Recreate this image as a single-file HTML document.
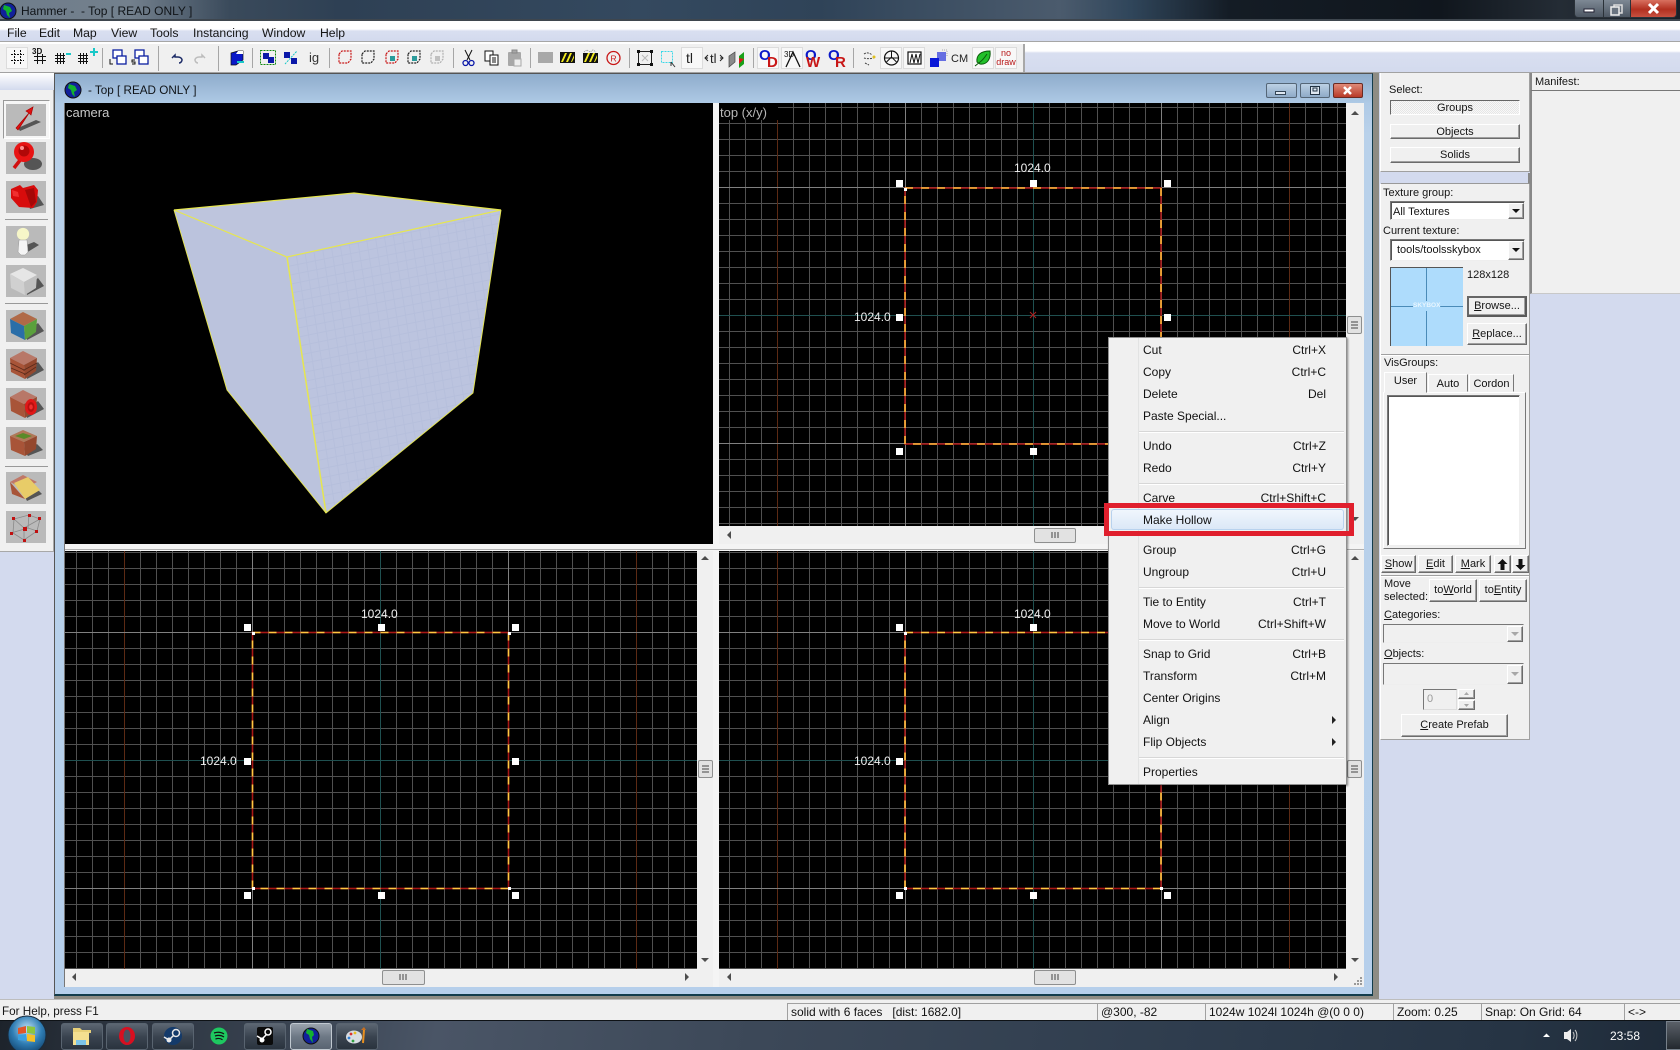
<!DOCTYPE html>
<html>
<head>
<meta charset="utf-8">
<title>Hammer - Top [ READ ONLY ]</title>
<style>
html,body{margin:0;padding:0;width:1680px;height:1050px;overflow:hidden;background:#d3daee}
body{position:relative;font-family:"Liberation Sans",sans-serif;font-size:12px;color:#111}
div{box-sizing:border-box}
.a{position:absolute}
.t{position:absolute;white-space:pre;line-height:14px;font-size:11px;color:#151515}
.b{position:absolute;background:#f0f0f0;border:1px solid;border-color:#fff #6b6b6b #6b6b6b #fff;box-shadow:inset -1px -1px #a0a0a0;text-align:center;white-space:pre;font-size:11px;color:#151515}
.sunk{position:absolute;background:#fff;border:1px solid;border-color:#777 #eee #eee #777;box-shadow:inset 1px 1px #555}
.m{position:absolute;left:1143px;white-space:pre;line-height:14px;font-size:12px;color:#111}
.s{position:absolute;right:354px;white-space:pre;line-height:14px;font-size:12px;color:#111}
.sep{position:absolute;left:1139px;width:205px;height:1px;background:#d7d7d7;border-bottom:1px solid #fff;box-sizing:content-box}
.pane{position:absolute;top:1003px;height:17px;border-left:1px solid #a0a0a0;border-top:1px solid #a0a0a0;padding-left:3px;line-height:16px;font-size:12px;white-space:pre;color:#111}
.tb{position:absolute;top:1023px;height:27px;width:42px;border:1px solid #596470;border-radius:3px;background:linear-gradient(#5c6672,#3a4450 50%,#2a333e)}
.mb{font-size:12.2px;top:26px}
</style>
</head>
<body>

<!-- Title bar -->
<div class="a" style="left:0;top:0;width:1680px;height:21px;background:linear-gradient(90deg,#6f7d8b 0,#73808d 130px,#3a4a5b 230px,#2e4054 340px,#34495f 640px,#2f4358 820px,#4b5b6d 1060px,#30465b 1130px,#141c25 1230px,#10161d 1440px,#242c35 1560px,#1a2028 1680px)"></div>
<div class="a" style="left:0;top:19px;width:1680px;height:2px;background:#3e464e"></div>
<div class="t" style="left:21px;top:4px;font-size:12px;color:#101418">Hammer -  - Top [ READ ONLY ]</div>
<!-- window buttons -->
<div class="a" style="left:1574px;top:0;width:30px;height:18px;background:linear-gradient(#7d8894,#4d5763);border:1px solid #2a3138;border-top:0;border-radius:0 0 0 4px"></div>
<div class="a" style="left:1604px;top:0;width:26px;height:18px;background:linear-gradient(#7d8894,#4d5763);border-bottom:1px solid #2a3138"></div>
<div class="a" style="left:1630px;top:0;width:47px;height:18px;background:linear-gradient(#d8705f,#b23020 55%,#c75040);border:1px solid #2a3138;border-top:0;border-radius:0 0 4px 0"></div>

<!-- Menu band -->
<div class="a" style="left:0;top:21px;width:1680px;height:20px;background:linear-gradient(#fff 0,#fff 8px,#d9dff0 10px,#d3daee 100%)"></div>
<div class="a" style="left:0;top:41px;width:1680px;height:1px;background:#a6a6a6"></div>
<div class="a" style="left:0;top:42px;width:1680px;height:31px;background:linear-gradient(#fff 0,#fff 9px,#d9dff0 11px,#d3daee 100%)"></div>
<div class="t mb" style="left:7px">File</div>
<div class="t mb" style="left:39px">Edit</div>
<div class="t mb" style="left:73px">Map</div>
<div class="t mb" style="left:111px">View</div>
<div class="t mb" style="left:150px">Tools</div>
<div class="t mb" style="left:193px">Instancing</div>
<div class="t mb" style="left:262px">Window</div>
<div class="t mb" style="left:320px">Help</div>

<!-- Toolbar -->
<div class="a" style="left:0;top:44px;width:1025px;height:29px;background:#f0f0f0;border-right:2px solid #a8a8a8;border-bottom:1px solid #a8a8a8"></div>
<div class="a" style="left:0;top:72px;width:1680px;height:1px;background:#a2a2a2"></div>

<!-- Left tool palette -->
<div class="a" style="left:0;top:73px;width:54px;height:17px;background:linear-gradient(#fff,#d3daee)"></div>
<div class="a" style="left:0;top:90px;width:54px;height:462px;background:#f0f0f0;border-right:1px solid #a8a8a8;border-bottom:1px solid #a8a8a8"></div>

<!-- MDI child window frame -->
<div class="a" style="left:1373px;top:73px;width:6px;height:926px;background:#8e8c84"></div>
<div class="a" style="left:54px;top:996px;width:1325px;height:3px;background:#8e8c84"></div>
<div class="a" style="left:54px;top:73px;width:1319px;height:923px;background:linear-gradient(#8fadcc 0,#afcae6 30px,#b9d1ea 60px,#b6cfeb 100%);border:1px solid #555;border-bottom:2px solid #123c4c;border-right:1px solid #123c4c"></div>
<div class="a" style="left:64px;top:103px;width:1300px;height:884px;background:#f0f0f0"></div>
<div class="t" style="left:88px;top:84px;font-size:11.700px;color:#101418">- Top [ READ ONLY ]</div>
<div class="a" style="left:1266px;top:83px;width:31px;height:15px;border:1px solid #567;border-radius:2px;background:linear-gradient(#bcd0e4,#8fabc8)"></div>
<div class="a" style="left:1275px;top:91px;width:11px;height:4px;background:#dfe8f2;border:1px solid #345"></div>
<div class="a" style="left:1300px;top:83px;width:30px;height:15px;border:1px solid #567;border-radius:2px;background:linear-gradient(#bcd0e4,#8fabc8)"></div>
<div class="a" style="left:1310px;top:86px;width:10px;height:9px;border:1px solid #234;background:#dfe8f2"></div>
<div class="a" style="left:1333px;top:83px;width:30px;height:15px;border:1px solid #6a2a22;border-radius:2px;background:linear-gradient(#e08a78,#b83a28)"></div>

<!-- Right side select panel -->
<div class="a" style="left:1380px;top:73px;width:150px;height:99px;background:#f0f0f0;border-bottom:1px solid #a0a0a0;border-right:1px solid #a0a0a0;border-left:1px solid #fff"></div>
<div class="a" style="left:1381px;top:173px;width:149px;height:11px;background:#d3daee;border-bottom:1px solid #999;border-right:2px solid #888"></div>
<div class="a" style="left:1380px;top:184px;width:150px;height:556px;background:#f0f0f0;border-right:1px solid #a0a0a0;border-bottom:1px solid #a0a0a0;border-left:1px solid #fff"></div>
<div class="a" style="left:1530px;top:73px;width:150px;height:221px;background:#f0f0f0;border-left:2px solid #888;border-bottom:1px solid #c8c8c8"></div>
<div class="a" style="left:1531px;top:90px;width:149px;height:1px;background:#777"></div>
<div class="t" style="left:1535px;top:75px">Manifest:</div>
<div class="t" style="left:1389px;top:83px">Select:</div>
<div class="b" style="left:1390px;top:100px;width:130px;height:15px;line-height:14px;border-color:#666 #fff #fff #666;box-shadow:none;background:repeating-conic-gradient(#f8f8f8 0 25%,#e6e6e6 0 50%) 0 0/2px 2px">Groups</div>
<div class="b" style="left:1390px;top:124px;width:130px;height:15px;line-height:14px">Objects</div>
<div class="b" style="left:1390px;top:147px;width:130px;height:16px;line-height:15px">Solids</div>

<div class="t" style="left:1383px;top:186px">Texture group:</div>
<div class="sunk" style="left:1390px;top:201px;width:135px;height:19px"></div>
<div class="t" style="left:1393px;top:205px">All Textures</div>
<div class="b" style="left:1508px;top:203px;width:16px;height:16px"></div>
<div class="t" style="left:1383px;top:224px">Current texture:</div>
<div class="sunk" style="left:1390px;top:239px;width:135px;height:22px"></div>
<div class="t" style="left:1397px;top:243px">tools/toolsskybox</div>
<div class="b" style="left:1508px;top:241px;width:16px;height:19px"></div>
<div class="a" style="left:1390px;top:267px;width:73px;height:79px;background:#aedcfc;border-left:1px solid #555;border-top:1px solid #555"></div>
<div class="a" style="left:1426px;top:268px;width:1px;height:78px;background:#4a8bb8"></div>
<div class="a" style="left:1391px;top:306px;width:72px;height:1px;background:#4a8bb8"></div>
<div class="a" style="left:1413px;top:301px;width:27px;height:10px;background:#aedcfc;color:#e8f6ff;font-size:6.500px;line-height:10px;text-align:center;white-space:pre;font-weight:bold">SKYBOX</div>
<div class="t" style="left:1467px;top:268px">128x128</div>
<div class="b" style="left:1467px;top:296px;width:60px;height:21px;line-height:16px;border:2px solid #5a5a5a;border-top-color:#666;border-left-color:#666"><u>B</u>rowse...</div>
<div class="b" style="left:1467px;top:323px;width:60px;height:22px;line-height:20px"><u>R</u>eplace...</div>
<div class="a" style="left:1381px;top:354px;width:148px;height:1px;background:#a0a0a0;border-bottom:1px solid #fff;box-sizing:content-box"></div>

<div class="t" style="left:1384px;top:356px">VisGroups:</div>
<div class="a" style="left:1383px;top:392px;width:143px;height:157px;background:#f0f0f0;border:1px solid;border-color:#fff #777 #777 #fff"></div>
<div class="a" style="left:1384px;top:372px;width:43px;height:21px;background:#f0f0f0;border:1px solid;border-color:#fff #777 #f0f0f0 #fff;text-align:center;line-height:17px;font-size:11px">User</div>
<div class="a" style="left:1428px;top:374px;width:40px;height:18px;background:#f0f0f0;border:1px solid;border-color:#fff #777 transparent #fff;text-align:center;line-height:18px;font-size:11px">Auto</div>
<div class="a" style="left:1469px;top:374px;width:45px;height:18px;background:#f0f0f0;border:1px solid;border-color:#fff #777 transparent #fff;text-align:center;line-height:18px;font-size:11px">Cordon</div>
<div class="sunk" style="left:1387px;top:395px;width:133px;height:151px"></div>
<div class="b" style="left:1381px;top:555px;width:35px;height:18px;line-height:16px"><u>S</u>how</div>
<div class="b" style="left:1418px;top:555px;width:35px;height:18px;line-height:16px"><u>E</u>dit</div>
<div class="b" style="left:1455px;top:555px;width:36px;height:18px;line-height:16px"><u>M</u>ark</div>
<div class="b" style="left:1494px;top:555px;width:17px;height:18px"></div>
<div class="b" style="left:1512px;top:555px;width:17px;height:18px"></div>
<div class="a" style="left:1381px;top:575px;width:148px;height:1px;background:#a0a0a0;border-bottom:1px solid #fff;box-sizing:content-box"></div>
<div class="t" style="left:1384px;top:577px">Move</div>
<div class="t" style="left:1384px;top:590px">selected:</div>
<div class="b" style="left:1429px;top:579px;width:48px;height:23px;line-height:20px">to<u>W</u>orld</div>
<div class="b" style="left:1479px;top:579px;width:48px;height:23px;line-height:20px">to<u>E</u>ntity</div>
<div class="t" style="left:1384px;top:608px"><u>C</u>ategories:</div>
<div class="a" style="left:1383px;top:624px;width:141px;height:19px;background:#f0f0f0;border:1px solid;border-color:#777 #eee #eee #777"></div>
<div class="b" style="left:1507px;top:626px;width:16px;height:16px"></div>
<div class="t" style="left:1384px;top:647px"><u>O</u>bjects:</div>
<div class="a" style="left:1383px;top:663px;width:141px;height:22px;background:#f0f0f0;border:1px solid;border-color:#777 #eee #eee #777"></div>
<div class="b" style="left:1507px;top:665px;width:16px;height:19px"></div>
<div class="a" style="left:1423px;top:689px;width:34px;height:21px;background:#f0f0f0;border:1px solid;border-color:#777 #ddd #ddd #777;color:#999;line-height:18px;padding-left:3px;font-size:11px">0</div>
<div class="b" style="left:1458px;top:689px;width:17px;height:10px"></div>
<div class="b" style="left:1458px;top:700px;width:17px;height:10px"></div>
<div class="b" style="left:1401px;top:714px;width:107px;height:23px;line-height:20px"><u>C</u>reate Prefab</div>

<!-- Views + everything vector -->
<svg class="a" style="left:0;top:0" width="1680" height="1050" viewBox="0 0 1680 1050" xmlns="http://www.w3.org/2000/svg" font-family="Liberation Sans, sans-serif">
<defs>
<pattern id="g1" patternUnits="userSpaceOnUse" x="729" y="107" width="16" height="16"><rect width="16" height="1" fill="#505050"/><rect width="1" height="16" fill="#505050"/></pattern>
<pattern id="g2" patternUnits="userSpaceOnUse" x="76" y="888" width="16" height="16"><rect width="16" height="1" fill="#505050"/><rect width="1" height="16" fill="#505050"/></pattern>
<pattern id="g3" patternUnits="userSpaceOnUse" x="729" y="888" width="16" height="16"><rect width="16" height="1" fill="#505050"/><rect width="1" height="16" fill="#505050"/></pattern>
<pattern id="tex" patternUnits="userSpaceOnUse" width="9" height="9" patternTransform="matrix(.98 -.2 .15 .98 287 257)"><rect width="9" height="1" fill="#a9b4d4"/><rect width="1" height="9" fill="#a9b4d4"/></pattern>
</defs>

<!-- camera -->
<rect x="64" y="103" width="649" height="441" fill="#000"/>
<polygon points="174,210 354,193 501,210 287,257" fill="#bec5dd"/>
<polygon points="174,210 287,257 326,513 227,390" fill="#bbc3dd"/>
<polygon points="287,257 501,210 473,393 326,513" fill="#bcc4df"/>
<polygon points="287,257 501,210 473,393 326,513" fill="url(#tex)" opacity=".3"/>
<g fill="none" stroke="#e6e650">
<polyline points="174,210 227,390 326,513 473,393 501,210" stroke-width=".9"/>
<polygon points="174,210 354,193 501,210 287,257" stroke-width="1.200"/>
<line x1="287" y1="257" x2="326" y2="513" stroke-width="1.500"/>
</g>
<text x="66" y="117" font-size="13" fill="#c8c8c8">camera</text>

<!-- top view -->
<rect x="719" y="103" width="627" height="423" fill="#000"/>
<rect x="719" y="103" width="627" height="423" fill="url(#g1)"/>
<g shape-rendering="crispEdges">
<rect x="777" y="103" width="1" height="423" fill="#5c2a14"/><rect x="1289" y="103" width="1" height="423" fill="#5c2a14"/>
<rect x="905" y="103" width="1" height="423" fill="#808080"/><rect x="1161" y="103" width="1" height="423" fill="#808080"/>
<rect x="1033" y="103" width="1" height="423" fill="#1f5050"/>
<rect x="719" y="187" width="627" height="1" fill="#808080"/><rect x="719" y="443" width="627" height="1" fill="#808080"/>
<rect x="719" y="315" width="627" height="1" fill="#1f5050"/>
</g>
<rect x="719" y="103" width="59" height="17" fill="#000"/>
<text x="720" y="117" font-size="13" fill="#b8b8b8">top (x/y)</text>
<path d="M1030 312l6 6M1036 312l-6 6" stroke="#b02020" fill="none"/>

<!-- bottom-left -->
<rect x="64" y="551" width="633" height="418" fill="#000"/>
<rect x="64" y="551" width="633" height="418" fill="url(#g2)"/>
<g shape-rendering="crispEdges">
<rect x="124" y="551" width="1" height="418" fill="#5c2a14"/><rect x="636" y="551" width="1" height="418" fill="#5c2a14"/>
<rect x="252" y="551" width="1" height="418" fill="#808080"/><rect x="508" y="551" width="1" height="418" fill="#808080"/>
<rect x="380" y="551" width="1" height="418" fill="#1f5050"/>
<rect x="64" y="632" width="633" height="1" fill="#808080"/><rect x="64" y="888" width="633" height="1" fill="#808080"/>
<rect x="64" y="760" width="633" height="1" fill="#1f5050"/>
</g>

<!-- bottom-right -->
<rect x="719" y="551" width="627" height="418" fill="#000"/>
<rect x="719" y="551" width="627" height="418" fill="url(#g3)"/>
<g shape-rendering="crispEdges">
<rect x="777" y="551" width="1" height="418" fill="#5c2a14"/><rect x="1289" y="551" width="1" height="418" fill="#5c2a14"/>
<rect x="905" y="551" width="1" height="418" fill="#808080"/><rect x="1161" y="551" width="1" height="418" fill="#808080"/>
<rect x="1033" y="551" width="1" height="418" fill="#1f5050"/>
<rect x="719" y="632" width="627" height="1" fill="#808080"/><rect x="719" y="888" width="627" height="1" fill="#808080"/>
<rect x="719" y="760" width="627" height="1" fill="#1f5050"/>
</g>

<!-- selection boxes -->
<g fill="none" stroke-width="1.600">
<rect x="905" y="188" width="256" height="256" stroke="#a81616"/>
<rect x="905" y="188" width="256" height="256" stroke="#ffb838" stroke-dasharray="8 8"/>
<rect x="252.500" y="632.500" width="256" height="256" stroke="#a81616"/>
<rect x="252.500" y="632.500" width="256" height="256" stroke="#ffc840" stroke-dasharray="8 8"/>
<rect x="905" y="632.500" width="256" height="256" stroke="#a81616"/>
<rect x="905" y="632.500" width="256" height="256" stroke="#ffc840" stroke-dasharray="8 8"/>
</g>
<g fill="#fff">
<rect x="896" y="180" width="7" height="7"/><rect x="1030" y="180" width="7" height="7"/><rect x="1164" y="180" width="7" height="7"/>
<rect x="896" y="314" width="7" height="7"/><rect x="1164" y="314" width="7" height="7"/>
<rect x="896" y="448" width="7" height="7"/><rect x="1030" y="448" width="7" height="7"/><rect x="1164" y="448" width="7" height="7"/>
<rect x="904" y="188" width="3" height="3"/>
<rect x="244" y="624" width="7" height="7"/><rect x="378" y="624" width="7" height="7"/><rect x="512" y="624" width="7" height="7"/>
<rect x="244" y="758" width="7" height="7"/><rect x="512" y="758" width="7" height="7"/>
<rect x="244" y="892" width="7" height="7"/><rect x="378" y="892" width="7" height="7"/><rect x="512" y="892" width="7" height="7"/>
<rect x="252" y="632" width="3" height="3"/><rect x="252" y="887" width="3" height="3"/><rect x="508" y="887" width="3" height="3"/><rect x="508" y="632" width="3" height="3"/>
<rect x="896" y="624" width="7" height="7"/><rect x="1030" y="624" width="7" height="7"/><rect x="1164" y="624" width="7" height="7"/>
<rect x="896" y="758" width="7" height="7"/><rect x="1164" y="758" width="7" height="7"/>
<rect x="896" y="892" width="7" height="7"/><rect x="1030" y="892" width="7" height="7"/><rect x="1164" y="892" width="7" height="7"/>
<rect x="904" y="632" width="3" height="3"/><rect x="904" y="887" width="3" height="3"/><rect x="1160" y="887" width="3" height="3"/>
</g>
<g fill="#f0f0f0" font-size="12">
<text x="1014" y="172">1024.0</text>
<text x="854" y="321">1024.0</text>
<text x="361" y="618">1024.0</text>
<text x="200" y="765">1024.0</text>
<text x="1014" y="618">1024.0</text>
<text x="854" y="765">1024.0</text>
</g>

<!-- scroll bars -->
<g>
<rect x="1346" y="103" width="18" height="423" fill="#f0f0f0"/>
<rect x="719" y="526" width="645" height="18" fill="#f0f0f0"/>
<rect x="697" y="551" width="16" height="418" fill="#f0f0f0"/>
<rect x="64" y="969" width="649" height="18" fill="#f0f0f0"/>
<rect x="1346" y="551" width="18" height="418" fill="#f0f0f0"/>
<rect x="719" y="969" width="645" height="18" fill="#f0f0f0"/>
<rect x="713" y="103" width="6" height="884" fill="#f4f4f4"/>
<rect x="64" y="544" width="1300" height="7" fill="#f4f4f4"/>
<rect x="64" y="549" width="1300" height="1" fill="#b0b0b0"/>
<rect x="64" y="103" width="1" height="884" fill="#777"/>
<!-- arrows -->
<g fill="#4d4d4d">
<path d="M1351 115l4-4 4 4z"/><path d="M1351 517l4 4 4-4z"/>
<path d="M731 531l-4 4 4 4z"/><path d="M1333 531l4 4-4 4z"/>
<path d="M701 560l4-4 4 4z"/><path d="M701 958l4 4 4-4z"/>
<path d="M76 973l-4 4 4 4z"/><path d="M685 973l4 4-4 4z"/>
<path d="M1351 560l4-4 4 4z"/><path d="M1351 958l4 4 4-4z"/>
<path d="M731 973l-4 4 4 4z"/><path d="M1334 973l4 4-4 4z"/>
</g>
<!-- thumbs -->
<g stroke="#8e8f8f">
<rect x="1034.500" y="528.500" width="41" height="14" rx="1.500" fill="#e2e2e2"/>
<rect x="1034.500" y="970.500" width="41" height="14" rx="1.500" fill="#e2e2e2"/>
<rect x="382.500" y="970.500" width="42" height="14" rx="1.500" fill="#e2e2e2"/>
<rect x="1347.500" y="316.500" width="14" height="17" rx="1.500" fill="#e2e2e2"/>
<rect x="1347.500" y="760.500" width="14" height="17" rx="1.500" fill="#e2e2e2"/>
<rect x="698.500" y="760.500" width="14" height="17" rx="1.500" fill="#e2e2e2"/>
</g>
<g stroke="#444" fill="none">
<path d="M1052 532v6M1055 532v6M1058 532v6M1052 974v6M1055 974v6M1058 974v6M400 974v6M403 974v6M406 974v6"/>
<path d="M1351 322h7M1351 325h7M1351 328h7M1351 766h7M1351 769h7M1351 772h7M702 766h7M702 769h7M702 772h7"/>
</g>
<g fill="#9a9a9a"><rect x="1360" y="983" width="2" height="2"/><rect x="1357" y="983" width="2" height="2"/><rect x="1354" y="983" width="2" height="2"/><rect x="1360" y="980" width="2" height="2"/><rect x="1357" y="980" width="2" height="2"/><rect x="1360" y="977" width="2" height="2"/></g>
</g>

<!-- globe icons -->
<g>
<circle cx="73" cy="90" r="8" fill="#11209a" stroke="#111"/>
<path d="M69 84l6 2 2 4-3 2 1 5-3-3-1-4-3-2z" fill="#12b030"/>
<circle cx="8" cy="11" r="8" fill="#11209a" stroke="#111"/>
<path d="M4 5l6 2 2 4-3 2 1 5-3-3-1-4-3-2z" fill="#12b030"/>
</g>

<!-- child window close X, title X -->
<path d="M1344 87l7 7M1351 87l-7 7" stroke="#fff" stroke-width="2.500" fill="none"/>
<path d="M1649 4l9 9M1658 4l-9 9" stroke="#fff" stroke-width="3" fill="none"/>
<rect x="1584" y="9" width="10" height="3" fill="#fff" stroke="#223"/>
<rect x="1614" y="5" width="8" height="8" fill="none" stroke="#ddd" stroke-width="1.500"/><rect x="1611" y="7" width="8" height="8" fill="#6a7480" stroke="#eee" stroke-width="1.500"/>
<rect x="1313" y="88" width="4" height="3" fill="none" stroke="#234"/>

<!-- combo arrows -->
<g fill="#111">
<path d="M1512 209h8l-4 4z"/><path d="M1512 248h8l-4 4z"/>
</g>
<g fill="#a8a8a8">
<path d="M1511 632h8l-4 4z"/><path d="M1511 672h8l-4 4z"/><path d="M1464 695l2.500-3 2.500 3z"/><path d="M1464 704l2.500 3 2.500-3z"/>
</g>
<g fill="#111">
<path d="M1502.500 559l5 5h-3v6h-4v-6h-3z"/><path d="M1520.500 570l5-5h-3v-6h-4v6h-3z"/>
</g>

<!-- toolbar separators -->
<g fill="#a6a6a6" shape-rendering="crispEdges">
<rect x="102" y="48" width="1" height="20"/><rect x="158" y="46" width="1" height="25"/><rect x="218" y="46" width="1" height="25"/><rect x="252" y="48" width="1" height="20"/><rect x="329" y="48" width="1" height="20"/><rect x="453" y="48" width="1" height="20"/><rect x="530" y="48" width="1" height="20"/><rect x="629" y="48" width="1" height="20"/><rect x="753" y="48" width="1" height="20"/><rect x="853" y="48" width="1" height="20"/>
</g>
<!-- pressed toolbar backgrounds -->
<g fill="#f8f8f8" stroke="#dcdcdc">
<rect x="6.500" y="47.500" width="21" height="21"/>
<rect x="681.500" y="47.500" width="21" height="21"/>
<rect x="757.500" y="47.500" width="21" height="21"/>
<rect x="781.500" y="47.500" width="21" height="21"/>
<rect x="880.500" y="47.500" width="21" height="21"/>
<rect x="903.500" y="47.500" width="21" height="21"/>
<rect x="972.500" y="47.500" width="21" height="21"/>
<rect x="995.500" y="47.500" width="21" height="21"/>
</g>

<!-- toolbar icons -->
<g fill="none" stroke="#111">
<path d="M11 54.500h13M11 60.500h13M14.500 50v15M20.500 50v15" stroke-dasharray="2 1"/>
<path d="M34 56.500h12M34 60.500h12M37.500 54v10M42.500 54v10"/>
<path d="M55 55.500h10M55 58.500h10M55 61.500h10M57.500 53v11M60.500 53v11M63.500 53v11"/>
<path d="M78 55.500h10M78 58.500h10M78 61.500h10M80.500 53v11M83.500 53v11M86.500 53v11"/>
</g>
<text x="32" y="54" font-size="8" font-weight="bold" fill="#111">3D</text>
<rect x="66" y="53" width="5" height="2" fill="#19c8c8"/>
<path d="M90 51h3v-3h2v3h3v2h-3v3h-2v-3h-3z" fill="#19c8c8"/>
<g fill="#fff" stroke="#0b1ea0" stroke-width="1.300">
<rect x="113" y="50" width="9" height="8"/><rect x="117" y="56" width="9" height="8"/><rect x="135" y="50" width="9" height="8"/><rect x="139" y="56" width="9" height="8"/>
</g>
<path d="M110 59v5h3" stroke="#111" fill="none"/><path d="M135 60h-3v2h3v2h-3" stroke="#111" fill="none"/>
<path d="M172 58l3-3v2h3c3 0 4 2 4 3s-1 3-3 3" stroke="#1b2a66" stroke-width="1.500" fill="none"/>
<path d="M205 58l-3-3v2h-3c-3 0-4 2-4 3s1 3 3 3" stroke="#bcbcbc" stroke-width="1.500" fill="none"/>
<path d="M231 53l7-2h5v9l-7 5h-5z" fill="#0a18c8" stroke="#111" stroke-width=".7"/><path d="M236 54h7v-3h-5z" fill="#fff"/><rect x="237" y="61" width="7" height="2" fill="#19c8c8"/>
<rect x="260.500" y="50.500" width="15" height="14" fill="none" stroke="#118811" stroke-dasharray="2 1"/>
<rect x="263" y="53" width="6" height="6" fill="#0a18a8"/><rect x="268" y="57" width="6" height="6" fill="#0a18a8"/>
<rect x="284" y="52" width="6" height="6" fill="#0a18a8"/><rect x="291" y="58" width="6" height="6" fill="#0a18a8"/><path d="M285 64l12-13" stroke="#19c8c8" stroke-dasharray="2 1"/>
<text x="309" y="62" font-size="13" fill="#333">ig</text>
<g fill="none" stroke-width="1.200">
<path d="M339 54l3-3h9v8l-3 4h-9z" stroke="#c81616" stroke-dasharray="2 1"/><path d="M362 54l3-3h9v8l-3 4h-9z" stroke="#222" stroke-dasharray="2 1"/><path d="M386 54l3-3h9v8l-3 4h-9z" stroke="#c81616" stroke-dasharray="2 1"/><path d="M408 54l3-3h9v8l-3 4h-9z" stroke="#222" stroke-dasharray="2 1"/><path d="M431 54l3-3h9v8l-3 4h-9z" stroke="#b0b0b0" stroke-dasharray="2 1"/>
</g>
<rect x="390" y="56" width="5" height="5" fill="#2a9a9a"/><rect x="412" y="56" width="5" height="5" fill="#2a9a9a"/><rect x="435" y="56" width="5" height="5" fill="#c0c0c0"/>
<path d="M465 50l5 10M472 50l-5 10" stroke="#111" fill="none"/><circle cx="465.500" cy="63" r="2.500" fill="none" stroke="#0a18a8" stroke-width="1.300"/><circle cx="471.500" cy="63" r="2.500" fill="none" stroke="#0a18a8" stroke-width="1.300"/>
<rect x="485" y="51" width="8" height="10" fill="#fff" stroke="#111"/><rect x="490" y="55" width="8" height="10" fill="#fff" stroke="#111"/><path d="M492 58h4M492 60h4M492 62h4" stroke="#111"/>
<rect x="508" y="52" width="13" height="14" rx="1" fill="#a8a8a8"/><rect x="512" y="50" width="5" height="3" fill="#a8a8a8" stroke="#888"/><rect x="514" y="59" width="7" height="7" fill="#eee" stroke="#a8a8a8"/>
<rect x="538" y="52" width="15" height="11" fill="#a8a8a8"/>
<rect x="560" y="52" width="15" height="11" fill="#111"/><path d="M561 62l4-9h2l-4 9zM566 62l4-9h2l-4 9zM571 62l3-7v3l-2 4z" fill="#f4ec20"/>
<rect x="583" y="53" width="15" height="10" fill="#111"/><path d="M584 62l4-9h2l-4 9zM589 62l4-9h2l-4 9zM594 62l3-7v3l-2 4z" fill="#f4ec20"/>
<path d="M584 52l3-2 3 2 3-2 3 2" stroke="#999" stroke-dasharray="1 1" fill="none"/>
<circle cx="613.500" cy="58" r="6.500" fill="none" stroke="#c81616" stroke-width="1.300"/><text x="610.500" y="61.500" font-size="8.500" fill="#c81616">R</text>
<rect x="638.500" y="51.500" width="13" height="13" fill="none" stroke="#222"/><rect x="637" y="50" width="3" height="3" fill="#111"/><rect x="650" y="50" width="3" height="3" fill="#111"/><rect x="637" y="63" width="3" height="3" fill="#111"/><rect x="650" y="63" width="3" height="3" fill="#111"/><path d="M642 55l6 6M648 55l-6 6" stroke="#bbb"/>
<rect x="661.500" y="51.500" width="11" height="11" fill="none" stroke="#3cd8e8" stroke-dasharray="2 1"/><path d="M671 62l4 5M671 62v4" stroke="#333" fill="none"/>
<text x="686" y="63" font-size="14" fill="#222">tl</text>
<text x="710" y="63" font-size="13" fill="#222">tl</text><path d="M708 55l-3 3 3 3M720 55l3 3-3 3" stroke="#222" fill="none"/><path d="M705 58h3M720 58h3" stroke="#222"/>
<path d="M729 56l6-4v10l-6 5z" fill="#8a8a8a" stroke="#444" stroke-width=".7"/><path d="M739 56l5-4v12l-5 4z" fill="#18a018"/><path d="M739 58l5 1-5 5z" fill="#d81818"/>
<g font-weight="bold" font-size="15">
<text x="759" y="60" fill="#0a18c8">O</text><text x="767" y="67" fill="#c81616">D</text>
<text x="805" y="60" fill="#0a18c8">O</text><text x="806" y="67" fill="#c81616">W</text>
<text x="828" y="60" fill="#0a18c8">O</text><text x="835" y="67" fill="#c81616">R</text>
</g>
<text x="784" y="57" font-size="8" fill="#111">3D</text><path d="M786 67l7-15 7 15" fill="none" stroke="#111" stroke-width="1.300"/>
<path d="M864 54c3-2 6-1 8 1M864 58c3 1 9 1 11-1M865 63l4 2" stroke="#444" stroke-dasharray="2 1" fill="none"/><circle cx="874" cy="57" r="1.500" fill="#e0c020"/>
<circle cx="891.500" cy="58" r="7" fill="none" stroke="#111" stroke-width="1.200"/><path d="M885 58h13M891.500 51v6l-5 5M891.500 57l5 5" stroke="#111" fill="none"/>
<rect x="908" y="52" width="13" height="12" fill="#fff" stroke="#111" stroke-width="1.200"/><path d="M910 63l2-9 2 9 2-9 2 9 2-9" stroke="#111" fill="none"/>
<rect x="930" y="58" width="9" height="9" fill="#0a18d8"/><rect x="937" y="52" width="9" height="9" fill="#0a18d8" opacity=".6"/><path d="M942 50l5 0v6" stroke="#aaa" stroke-dasharray="1 1" fill="none"/>
<text x="951" y="62" font-size="11" fill="#222">CM</text>
<path d="M977 62c-1-7 4-11 13-11 1 8-3 14-10 13z" fill="#22c02a" stroke="#0a5a0a"/><path d="M975 66l5-4c3-2 5-5 7-8" stroke="#0a5a0a" fill="none"/>
<text x="1006" y="56" text-anchor="middle" font-size="9" fill="#b81818">no</text><text x="1006" y="65" text-anchor="middle" font-size="9" fill="#b81818">draw</text>

<!-- left palette -->
<rect x="3.500" y="100.500" width="46" height="38" fill="#f6f6f6" stroke="#fff"/>
<path d="M3.500 138.500V100.500H49.500" stroke="#999" fill="none"/>
<g fill="#bababa">
<rect x="6" y="104" width="40" height="32"/><rect x="6" y="142" width="40" height="32"/><rect x="6" y="181" width="40" height="32"/><rect x="6" y="226" width="40" height="32"/><rect x="6" y="265" width="40" height="32"/><rect x="6" y="310" width="40" height="32"/><rect x="6" y="349" width="40" height="32"/><rect x="6" y="388" width="40" height="32"/><rect x="6" y="427" width="40" height="32"/><rect x="6" y="472" width="40" height="32"/><rect x="6" y="511" width="40" height="32"/>
</g>
<g fill="#999"><rect x="5" y="219" width="43" height="1"/><rect x="5" y="303" width="43" height="1"/><rect x="5" y="466" width="43" height="1"/></g>
<!-- select -->
<path d="M20 131l21-9-5-2-18 8z" fill="#555"/>
<path d="M16 128l13-15-3-2 7-4-2 8-2-2-11 17z" fill="#e01010" stroke="#a00" stroke-width=".7"/>
<!-- magnify -->
<ellipse cx="33" cy="164" rx="9" ry="6" fill="#555"/>
<path d="M14 168l7-9" stroke="#d01010" stroke-width="3.500"/>
<circle cx="24" cy="152" r="10" fill="#e81414"/><circle cx="24" cy="151" r="5.500" fill="#b00808"/><circle cx="22" cy="148" r="2" fill="#ff9090"/>
<!-- camera -->
<path d="M30 209l14-4-6-9-10 6z" fill="#555"/>
<path d="M11 189l9-4 3 3 11-3 4 5-1 12-4 6-14-1-8-9z" fill="#d80c0c"/><path d="M25 190l9-2 2 14-5 5z" fill="#a50808"/><path d="M12 190l6 2 1 5-6-1z" fill="#f03030"/>
<!-- light -->
<path d="M26 253l13-8-5-3-10 4z" fill="#555"/>
<circle cx="23" cy="234" r="6.500" fill="#f6f6c8" stroke="#bbb" stroke-width=".7"/><path d="M19 240h8l1 12-3 3h-4l-3-3z" fill="#f4f4f4" stroke="#999" stroke-width=".5"/>
<!-- gray cube -->
<path d="M27 295l17-9-6-8-12 10z" fill="#555"/>
<polygon points="10,274 23,268 37,275 24,282" fill="#e6e6e6"/><polygon points="10,274 24,282 25,295 11,288" fill="#d0d0d0"/><polygon points="24,282 37,275 36,288 25,295" fill="#c0c0c0"/>
<!-- cube: multi -->
<path d="M27 340l17-9-6-8-12 10z" fill="#555"/>
<polygon points="10,319 23,312 37,319 24,326" fill="#b06a48"/><polygon points="10,319 24,326 25,340 11,333" fill="#2a6ea8"/><polygon points="24,326 37,319 36,332 25,340" fill="#5aa03c"/>
<!-- brick -->
<path d="M27 379l17-9-6-8-12 10z" fill="#555"/>
<polygon points="10,358 23,351 37,358 24,365" fill="#b87868"/><polygon points="10,358 24,365 25,379 11,372" fill="#a85438"/><polygon points="24,365 37,358 36,371 25,379" fill="#94482e"/>
<path d="M10 363l14 7v1M11 368l14 6M24 370l13-7M24 375l12-8" stroke="#5a2a1a" fill="none" stroke-width=".8"/>
<!-- brick target -->
<path d="M27 418l17-9-6-8-12 10z" fill="#555"/>
<polygon points="10,397 23,390 37,397 24,404" fill="#b87868"/><polygon points="10,397 24,404 25,418 11,411" fill="#a85438"/><polygon points="24,404 37,397 36,410 25,418" fill="#94482e"/>
<ellipse cx="31" cy="407" rx="6" ry="8" fill="#e01818"/><ellipse cx="31" cy="407" rx="3.500" ry="5" fill="#b81010"/><ellipse cx="31" cy="407" rx="1.800" ry="2.500" fill="#f03030"/>
<!-- brick green -->
<path d="M28 456l15-6-6-6-12 8z" fill="#555"/>
<polygon points="10,436 23,430 37,436 24,442" fill="#b07858"/><polygon points="15,436 23,433 32,436 24,439" fill="#5a8a28"/><polygon points="10,436 24,442 25,456 11,450" fill="#a85438"/><polygon points="24,442 37,436 36,449 25,456" fill="#94482e"/>
<!-- brick yellow -->
<path d="M27 501l15-7-5-5-12 8z" fill="#555"/>
<polygon points="10,482 23,475 37,482 24,489" fill="#c07868"/><polygon points="14,483 28,477 40,490 25,499" fill="#e8cc68"/><polygon points="10,482 25,499 12,494" fill="#a85438"/>
<!-- vertex -->
<g fill="none" stroke="#8a8a8a" stroke-width=".8"><path d="M14 519l15-4 11 4-3 12-13 9-11-7zM14 519l10 9 16-9M24 528v12M29 515l-1 13 9 3M11 533l17-5"/></g>
<g fill="#c01010"><rect x="12" y="517" width="3" height="3"/><rect x="28" y="514" width="3" height="3"/><rect x="38" y="517" width="3" height="3"/><rect x="23" y="527" width="4" height="4"/><rect x="35" y="530" width="3" height="3"/><rect x="10" y="532" width="3" height="3"/><rect x="23" y="539" width="3" height="3"/></g>
</svg>

<!-- Context menu -->
<div class="a" style="left:1108px;top:337px;width:239px;height:448px;background:#f0f0f0;border:1px solid #8f8f8f;box-shadow:1px 1px 2px rgba(0,0,0,.45)"></div>
<div class="a" style="left:1138px;top:338px;width:1px;height:446px;background:#e2e3e3"></div>
<div class="a" style="left:1111px;top:509px;width:233px;height:21px;background:linear-gradient(#f0f6fd,#dbe8f7);border:1px solid #b8d2ee;border-radius:3px"></div>
<div class="m" style="top:343px">Cut</div><div class="s" style="top:343px">Ctrl+X</div>
<div class="m" style="top:365px">Copy</div><div class="s" style="top:365px">Ctrl+C</div>
<div class="m" style="top:387px">Delete</div><div class="s" style="top:387px">Del</div>
<div class="m" style="top:409px">Paste Special...</div>
<div class="sep" style="top:431px"></div>
<div class="m" style="top:439px">Undo</div><div class="s" style="top:439px">Ctrl+Z</div>
<div class="m" style="top:461px">Redo</div><div class="s" style="top:461px">Ctrl+Y</div>
<div class="sep" style="top:483px"></div>
<div class="m" style="top:491px">Carve</div><div class="s" style="top:491px">Ctrl+Shift+C</div>
<div class="m" style="top:513px">Make Hollow</div>
<div class="m" style="top:543px">Group</div><div class="s" style="top:543px">Ctrl+G</div>
<div class="m" style="top:565px">Ungroup</div><div class="s" style="top:565px">Ctrl+U</div>
<div class="sep" style="top:587px"></div>
<div class="m" style="top:595px">Tie to Entity</div><div class="s" style="top:595px">Ctrl+T</div>
<div class="m" style="top:617px">Move to World</div><div class="s" style="top:617px">Ctrl+Shift+W</div>
<div class="sep" style="top:639px"></div>
<div class="m" style="top:647px">Snap to Grid</div><div class="s" style="top:647px">Ctrl+B</div>
<div class="m" style="top:669px">Transform</div><div class="s" style="top:669px">Ctrl+M</div>
<div class="m" style="top:691px">Center Origins</div>
<div class="m" style="top:713px">Align</div>
<div class="m" style="top:735px">Flip Objects</div>
<div class="sep" style="top:757px"></div>
<div class="m" style="top:765px">Properties</div>
<div class="a" style="left:1332px;top:716px;width:0;height:0;border-left:4px solid #222;border-top:4px solid transparent;border-bottom:4px solid transparent"></div>
<div class="a" style="left:1332px;top:738px;width:0;height:0;border-left:4px solid #222;border-top:4px solid transparent;border-bottom:4px solid transparent"></div>
<div class="a" style="left:1104px;top:503px;width:250px;height:33px;border:5px solid #e01f2d"></div>

<!-- Status bar -->
<div class="a" style="left:0;top:999px;width:1680px;height:21px;background:#f0f0f0;border-top:1px solid #bdbdbd"></div>
<div class="t" style="left:2px;top:1005px;font-size:11.700px">For Help, press F1</div>
<div class="pane" style="left:787px;width:310px">solid with 6 faces   [dist: 1682.0]</div>
<div class="pane" style="left:1097px;width:108px">@300, -82</div>
<div class="pane" style="left:1205px;width:188px">1024w 1024l 1024h @(0 0 0)</div>
<div class="pane" style="left:1393px;width:88px">Zoom: 0.25</div>
<div class="pane" style="left:1481px;width:143px">Snap: On Grid: 64</div>
<div class="pane" style="left:1624px;width:56px">&lt;-&gt;</div>

<!-- Taskbar -->
<div class="a" style="left:0;top:1020px;width:1680px;height:30px;background:linear-gradient(100deg,#1d232b 0,#2a323d 6%,#3a4452 18%,#4a5566 26%,#3c4858 45%,#2f3d4e 70%,#263444 90%,#1e2a38 100%);border-top:1px solid #0e1216"></div>
<div class="tb" style="left:61px"></div>
<div class="tb" style="left:106px"></div>
<div class="tb" style="left:152px"></div>
<div class="tb" style="left:244px"></div>
<div class="tb" style="left:290px;background:linear-gradient(#9aa3ad,#6e7986 50%,#596472);border-color:#c0c8d0"></div>
<div class="tb" style="left:336px"></div>
<div class="a" style="left:1666px;top:1021px;width:14px;height:29px;background:linear-gradient(#5a6068,#23282e);border:1px solid #77808a;border-right:0"></div>
<div class="a" style="left:1610px;top:1028px;color:#fff;font-size:12px;line-height:16px;white-space:pre">23:58</div>

<svg class="a" style="left:0;top:1010px" width="1680" height="40" viewBox="0 1010 1680 40" xmlns="http://www.w3.org/2000/svg">
<defs><radialGradient id="orb" cx=".5" cy=".35" r=".7"><stop offset="0" stop-color="#bfe2f8"/><stop offset=".55" stop-color="#2f7db4"/><stop offset="1" stop-color="#0f3e68"/></radialGradient></defs>
<circle cx="27" cy="1035" r="19" fill="url(#orb)" stroke="#1a2a3a"/>
<path d="M18 1028l8-2v7l-8 1z" fill="#e0562a"/><path d="M27 1026l8 1v7l-8-1z" fill="#8cc63f"/><path d="M18 1035l8-1v7l-8-1z" fill="#3aa0e0"/><path d="M27 1034l8 1v7l-8-1z" fill="#f5c026"/>
<!-- folder -->
<path d="M73 1028h7l2 2h9v3H73z" fill="#e8d078"/><rect x="73" y="1032" width="16" height="13" fill="#f4df90"/><path d="M76 1045v-5h10v5z" fill="#7cc4e8"/>
<!-- opera -->
<ellipse cx="127" cy="1036" rx="8" ry="9" fill="#d80f20"/><ellipse cx="127" cy="1036" rx="3.500" ry="6.500" fill="#4a5260"/>
<!-- steam -->
<circle cx="173" cy="1036" r="9" fill="#143a6a"/><circle cx="176" cy="1033" r="3.500" fill="none" stroke="#e8e8e8" stroke-width="1.500"/><circle cx="169" cy="1040" r="2.500" fill="#e8e8e8"/><path d="M164 1037l5 3 5-5" stroke="#e8e8e8" stroke-width="1.500" fill="none"/>
<!-- spotify -->
<circle cx="219" cy="1036" r="8.500" fill="#1ec860"/><path d="M214 1033c3-1 7-1 10 1M215 1036c3-1 6-1 9 1M215.500 1039c2-.7 5-.7 7 .7" stroke="#111" stroke-width="1.200" fill="none"/>
<!-- steam black -->
<rect x="257" y="1027" width="16" height="18" rx="2" fill="#0b0b0b"/><circle cx="268" cy="1032" r="3" fill="none" stroke="#fff" stroke-width="1.500"/><circle cx="262" cy="1040" r="2.500" fill="#fff"/><path d="M257 1036l5 3 5-5" stroke="#fff" stroke-width="1.500" fill="none"/>
<!-- hammer -->
<circle cx="311" cy="1036" r="8" fill="#11209a" stroke="#111"/><path d="M307 1029l6 2 1 4-2 2 1 6-3-4-1-4-3-2z" fill="#12b030"/>
<!-- paint -->
<ellipse cx="354" cy="1037" rx="8" ry="6.500" fill="#d8dde2"/><circle cx="351" cy="1034" r="1.400" fill="#d83030"/><circle cx="355" cy="1033" r="1.400" fill="#e8c020"/><circle cx="349" cy="1038" r="1.400" fill="#3080d8"/><circle cx="353" cy="1041" r="1.400" fill="#30a040"/><path d="M363 1043l1-13" stroke="#e89020" stroke-width="2"/><path d="M361 1030l3-3 2 3z" fill="#c87020"/>
<!-- tray -->
<path d="M1543 1037l3.500-3.500 3.500 3.500z" fill="#fff"/>
<path d="M1564 1032h3l4-3v13l-4-3h-3z" fill="#eee"/><path d="M1573 1032c1.500 2 1.500 5 0 7M1575 1030c2.500 3 2.500 8 0 11" stroke="#ccc" fill="none"/>
</svg>

</body>
</html>
